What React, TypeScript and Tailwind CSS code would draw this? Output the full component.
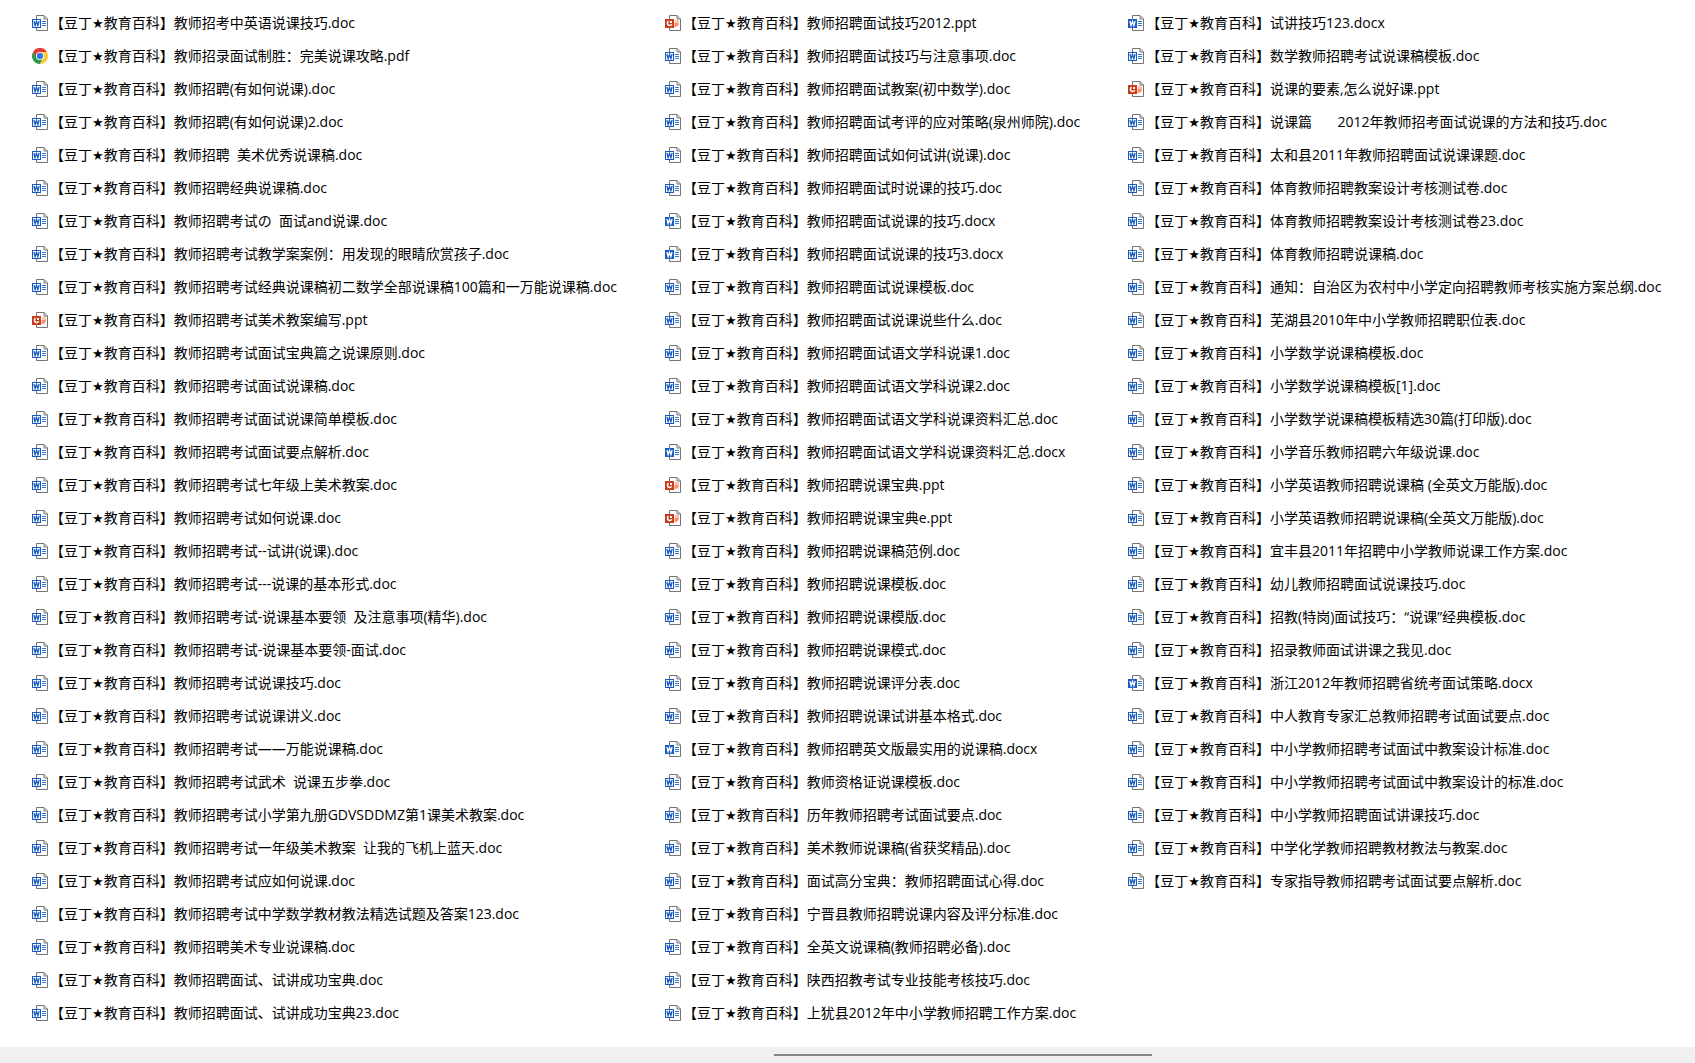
type FileKind = "doc" | "docx" | "ppt" | "pdf";

const PREFIX_START = "【豆丁";
const PREFIX_END = "教育百科】";

const COLUMNS: string[][] = [
  [
    "教师招考中英语说课技巧.doc",
    "教师招录面试制胜：完美说课攻略.pdf",
    "教师招聘(有如何说课).doc",
    "教师招聘(有如何说课)2.doc",
    "教师招聘  美术优秀说课稿.doc",
    "教师招聘经典说课稿.doc",
    "教师招聘考试の  面试and说课.doc",
    "教师招聘考试教学案案例：用发现的眼睛欣赏孩子.doc",
    "教师招聘考试经典说课稿初二数学全部说课稿100篇和一万能说课稿.doc",
    "教师招聘考试美术教案编写.ppt",
    "教师招聘考试面试宝典篇之说课原则.doc",
    "教师招聘考试面试说课稿.doc",
    "教师招聘考试面试说课简单模板.doc",
    "教师招聘考试面试要点解析.doc",
    "教师招聘考试七年级上美术教案.doc",
    "教师招聘考试如何说课.doc",
    "教师招聘考试--试讲(说课).doc",
    "教师招聘考试---说课的基本形式.doc",
    "教师招聘考试-说课基本要领  及注意事项(精华).doc",
    "教师招聘考试-说课基本要领-面试.doc",
    "教师招聘考试说课技巧.doc",
    "教师招聘考试说课讲义.doc",
    "教师招聘考试——万能说课稿.doc",
    "教师招聘考试武术  说课五步拳.doc",
    "教师招聘考试小学第九册GDVSDDMZ第1课美术教案.doc",
    "教师招聘考试一年级美术教案  让我的飞机上蓝天.doc",
    "教师招聘考试应如何说课.doc",
    "教师招聘考试中学数学教材教法精选试题及答案123.doc",
    "教师招聘美术专业说课稿.doc",
    "教师招聘面试、试讲成功宝典.doc",
    "教师招聘面试、试讲成功宝典23.doc",
  ],
  [
    "教师招聘面试技巧2012.ppt",
    "教师招聘面试技巧与注意事项.doc",
    "教师招聘面试教案(初中数学).doc",
    "教师招聘面试考评的应对策略(泉州师院).doc",
    "教师招聘面试如何试讲(说课).doc",
    "教师招聘面试时说课的技巧.doc",
    "教师招聘面试说课的技巧.docx",
    "教师招聘面试说课的技巧3.docx",
    "教师招聘面试说课模板.doc",
    "教师招聘面试说课说些什么.doc",
    "教师招聘面试语文学科说课1.doc",
    "教师招聘面试语文学科说课2.doc",
    "教师招聘面试语文学科说课资料汇总.doc",
    "教师招聘面试语文学科说课资料汇总.docx",
    "教师招聘说课宝典.ppt",
    "教师招聘说课宝典e.ppt",
    "教师招聘说课稿范例.doc",
    "教师招聘说课模板.doc",
    "教师招聘说课模版.doc",
    "教师招聘说课模式.doc",
    "教师招聘说课评分表.doc",
    "教师招聘说课试讲基本格式.doc",
    "教师招聘英文版最实用的说课稿.docx",
    "教师资格证说课模板.doc",
    "历年教师招聘考试面试要点.doc",
    "美术教师说课稿(省获奖精品).doc",
    "面试高分宝典：教师招聘面试心得.doc",
    "宁晋县教师招聘说课内容及评分标准.doc",
    "全英文说课稿(教师招聘必备).doc",
    "陕西招教考试专业技能考核技巧.doc",
    "上犹县2012年中小学教师招聘工作方案.doc",
  ],
  [
    "试讲技巧123.docx",
    "数学教师招聘考试说课稿模板.doc",
    "说课的要素,怎么说好课.ppt",
    "说课篇       2012年教师招考面试说课的方法和技巧.doc",
    "太和县2011年教师招聘面试说课课题.doc",
    "体育教师招聘教案设计考核测试卷.doc",
    "体育教师招聘教案设计考核测试卷23.doc",
    "体育教师招聘说课稿.doc",
    "通知：自治区为农村中小学定向招聘教师考核实施方案总纲.doc",
    "芜湖县2010年中小学教师招聘职位表.doc",
    "小学数学说课稿模板.doc",
    "小学数学说课稿模板[1].doc",
    "小学数学说课稿模板精选30篇(打印版).doc",
    "小学音乐教师招聘六年级说课.doc",
    "小学英语教师招聘说课稿 (全英文万能版).doc",
    "小学英语教师招聘说课稿(全英文万能版).doc",
    "宜丰县2011年招聘中小学教师说课工作方案.doc",
    "幼儿教师招聘面试说课技巧.doc",
    "招教(特岗)面试技巧：“说课”经典模板.doc",
    "招录教师面试讲课之我见.doc",
    "浙江2012年教师招聘省统考面试策略.docx",
    "中人教育专家汇总教师招聘考试面试要点.doc",
    "中小学教师招聘考试面试中教案设计标准.doc",
    "中小学教师招聘考试面试中教案设计的标准.doc",
    "中小学教师招聘面试讲课技巧.doc",
    "中学化学教师招聘教材教法与教案.doc",
    "专家指导教师招聘考试面试要点解析.doc",
  ],
];

function Page() {
  return (
    <path
      d="M4.5 .5H12L15.5 4V15.5H4.5ZM12 .5V4H15.5"
      fill="#fdfdfd"
      stroke="#747474"
    />
  );
}

function WordIcon({ filled }: { filled: boolean }) {
  return (
    <svg viewBox="0 0 16 16" className="h-4 w-4 shrink-0" aria-hidden="true">
      <Page />
      <path d="M10 6.5H14M10 8.5H14M10 10.5H14" stroke="#2b7cd3" />
      <rect
        x=".5"
        y="4.5"
        width="8"
        height="8"
        fill={filled ? "#185abd" : "#ffffff"}
        stroke="#185abd"
      />
      <path
        d="M1.9 6L3.1 10.6L4.5 6.4L5.9 10.6L7.1 6"
        fill="none"
        stroke={filled ? "#ffffff" : "#185abd"}
        strokeWidth="1.3"
      />
    </svg>
  );
}

function PptIcon() {
  return (
    <svg viewBox="0 0 16 16" className="h-4 w-4 shrink-0" aria-hidden="true">
      <Page />
      <path d="M10 5H14V8H10Z" fill="#ffc3b0" />
      <path d="M9.5 8H14A4 4 0 0 1 9.5 12Z" fill="#ff8f6b" />
      <rect x="0" y="4" width="9" height="9" fill="#c43e1c" />
      <path
        d="M3.6 6.2A2.3 2.3 0 1 0 6.8 9.2"
        fill="none"
        stroke="#ffffff"
        strokeWidth="1.5"
      />
      <path d="M5 6H7V8H5Z" fill="#ffffff" />
    </svg>
  );
}

function ChromeIcon() {
  return (
    <svg viewBox="0 0 48 48" className="h-4 w-4 shrink-0" aria-hidden="true">
      <path d="M3.2 12A24 24 0 0 0 24 48L34.4 30L24 24Z" fill="#2a9d4a" />
      <path d="M44.8 12A24 24 0 0 1 24 48L34.4 30L24 12Z" fill="#fcc934" />
      <path d="M3.2 12L13.6 30L24 12H44.8A24 24 0 0 0 3.2 12Z" fill="#e33b2e" />
      <circle cx="24" cy="24" r="12" fill="#ffffff" />
      <circle cx="24" cy="24" r="9.5" fill="#3378e8" />
    </svg>
  );
}

function FileIcon({ kind }: { kind: FileKind }) {
  if (kind === "pdf") return <ChromeIcon />;
  if (kind === "ppt") return <PptIcon />;
  return <WordIcon filled={kind === "docx"} />;
}

function FileRow({ name }: { name: string }) {
  const kind = name.split(".").pop() as FileKind;
  return (
    <li>
      <button className="flex h-[33px] items-center gap-0.5 whitespace-pre text-left hover:bg-sky-50">
        <FileIcon kind={kind} />
        <span>
          {PREFIX_START}
          <span className="font-['DejaVu_Sans'] text-[13px] leading-none">★</span>
          {PREFIX_END}
          {name}
        </span>
      </button>
    </li>
  );
}

export default function App() {
  return (
    <div
      lang="zh-CN"
      className="flex min-h-screen flex-col bg-white font-['Open_Sans','Noto_Sans_CJK_SC',sans-serif] text-[14px] leading-5 text-black"
    >
      <main className="flex flex-1 gap-12 overflow-hidden pt-1.5 pl-8">
        {COLUMNS.map((files, i) => (
          <ul key={i} className="shrink-0">
            {files.map((name) => (
              <FileRow key={name} name={name} />
            ))}
          </ul>
        ))}
      </main>
      <div className="h-4 bg-[#f0f0f0] pt-[7px]">
        <div className="ml-[45.65%] h-0.5 w-[22.3%] bg-[#858585]" />
      </div>
    </div>
  );
}
